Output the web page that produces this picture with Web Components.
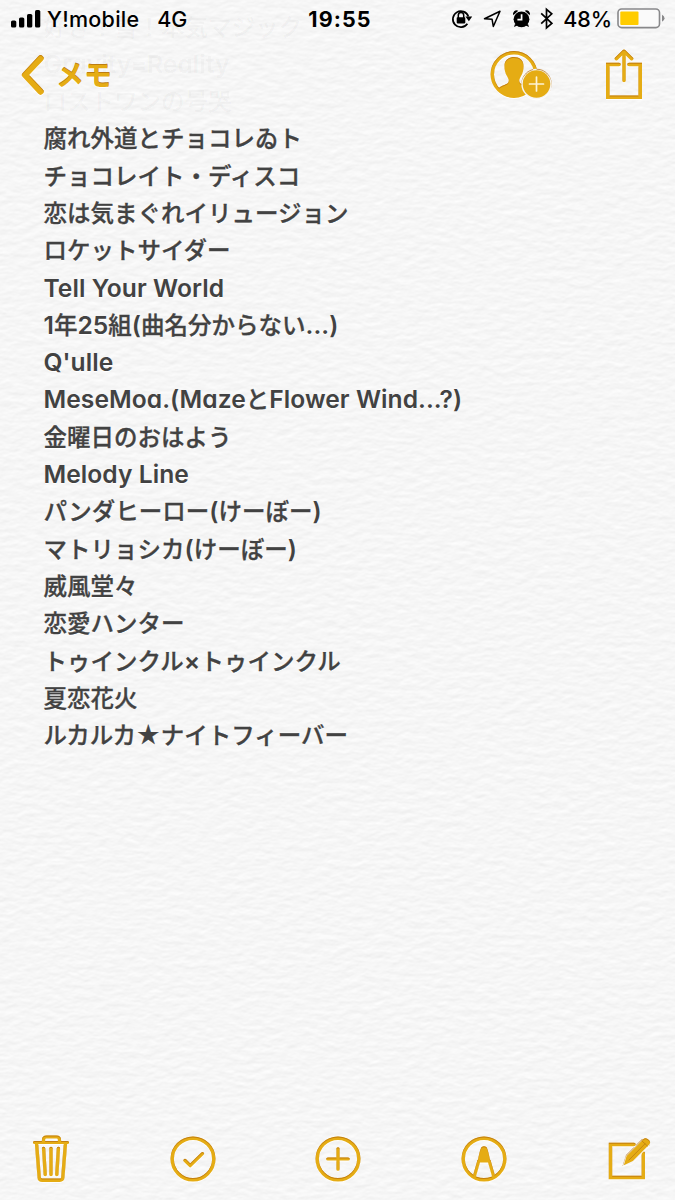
<!DOCTYPE html>
<html lang="ja">
<head>
<meta charset="UTF-8">
<title>メモ</title>
<style>
    html, body { margin: 0; height: 100%; }
    body {
        --gold: #e5ac14;
        --gold-edge: #bd7d12;
        --ink: #424242;
        --paper: #f6f6f6;
        background: var(--paper);
        font-family: Inter, "Noto Sans CJK JP", sans-serif;
        overflow: hidden;
    }
</style>
</head>
<body>
<note-app>
    <status-bar slot="status" carrier="Y!mobile" network="4G" time="19:55" battery="48"></status-bar>
    <nav-bar slot="nav" back="メモ"></nav-bar>
    <note-line class="ghost">好き！雪！本気マジック</note-line>
    <note-line class="ghost">Gravity=Reality</note-line>
    <note-line class="ghost">ロストワンの号哭</note-line>
    <note-line>腐れ外道とチョコレゐト</note-line>
    <note-line>チョコレイト・ディスコ</note-line>
    <note-line>恋は気まぐれイリュージョン</note-line>
    <note-line>ロケットサイダー</note-line>
    <note-line>Tell Your World</note-line>
    <note-line>1年25組(曲名分からない...)</note-line>
    <note-line>Q'ulle</note-line>
    <note-line>MeseMoa.(MazeとFlower Wind...?)</note-line>
    <note-line>金曜日のおはよう</note-line>
    <note-line>Melody Line</note-line>
    <note-line>パンダヒーロー(けーぼー)</note-line>
    <note-line>マトリョシカ(けーぼー)</note-line>
    <note-line>威風堂々</note-line>
    <note-line>恋愛ハンター</note-line>
    <note-line>トゥインクル×トゥインクル</note-line>
    <note-line>夏恋花火</note-line>
    <note-line>ルカルカ★ナイトフィーバー</note-line>
    <tool-bar slot="tools"></tool-bar>
</note-app>

<script>
const ICONS = {
    back: { w: 24, h: 40, art: '<path d="M20.6 3.4 5 20l15.6 16.6" stroke-width="6.2"/>' },
    person: {
        w: 62, h: 50,
        art: `<circle cx="24" cy="24.5" r="21.7" stroke-width="3.4"/>
            <path class="fill" d="M7.5 39.5c3-4 8-4.5 10.5-6.500 1.500-2 .5-4-.5-6-2.500-4-3-7-3-11 0-6 4-9 9.500-9s9.500 3 9.500 9c0 4-.5 7-3 11-1 2-2 4-.5 6 2 2 8 3 11 6-5 5-10 7-17 7S12.500 44 7.500 39.500z"/>
            <circle class="gap" cx="46.5" cy="34" r="15.2"/>
            <circle class="fill" cx="46.5" cy="34" r="13.800"/>
            <path class="light" d="M39.5 34h14M46.5 27v14"/>`
    },
    share: { w: 40, h: 52, art: '<path d="M15 15.5H3.8v32.8h32.4V15.5H25" stroke-width="3.6" stroke-linejoin="miter"/><path d="M20 31.500V2.500M12.4 9.800 20 2.200l7.600 7.600" stroke-width="3.4"/>' },
    trash: { w: 40, h: 50, art: '<path d="M3.5 8.5h33M12.5 8V6q0-3 3-3h10q3 0 3 3v2" stroke-width="3.2"/><path d="m5.5 9 2.7 34.5q.2 2.8 3 2.8h17.6q2.8 0 3-2.8L34.5 9M12.6 14.5l1.6 26M20 14.5v26M27.4 14.5l-1.6 26" stroke-width="3.4"/>' },
    check: { w: 48, h: 48, art: '<circle cx="24" cy="24" r="20.8" stroke-width="3.4"/><path d="m16 25.5 5.2 5.2L33.5 18.6" stroke-width="3.2"/>' },
    plus: { w: 48, h: 48, art: '<circle cx="24" cy="24" r="20.8" stroke-width="3.4"/><path d="M13.8 24h20.4M24 13.8v20.4" stroke-width="3.2"/>' },
    pen: { w: 48, h: 48, art: '<circle cx="24" cy="24" r="20.8" stroke-width="3.4"/><path d="m14.5 41 4.3-15h10.4l4.3 15" stroke-width="3"/><path class="fill" d="M17.6 26.8c1-5 2.6-13.3 4.1-14.7q2.3-1.8 4.6 0c1.5 1.4 3.1 9.7 4.1 14.7z"/>' },
    compose: { w: 48, h: 50, art: '<path d="M29 10.500H5.5v33h32.8V19" stroke-width="3.4" stroke-linejoin="miter"/><path class="gap" d="m17.5 32 3.5-11L37 5l8 6-18 18.5z"/><path class="fill" d="m18.8 31.3 2.8-9.2L38.5 5c2.3-2.7 8.6 2.2 6 5.2L27.9 27z"/><path class="groove" d="m24 26 16-16.2M37 7l5.4 5"/>' }
};

class NoteIcon extends HTMLElement {
    connectedCallback() {
        const icon = ICONS[this.getAttribute('name')];
        this.attachShadow({ mode: 'open' });
        this.shadowRoot.innerHTML = `
            <style>
                :host { display: block; width: ${icon.w}px; height: ${icon.h}px; flex: none; }
                svg { display: block; overflow: visible; }
                g { fill: none; stroke: var(--gold); stroke-linecap: round; stroke-linejoin: round; }
                .fill { fill: var(--gold); stroke: none; }
                .gap { fill: var(--paper); stroke: none; }
                .light { stroke: #fdf3d6; stroke-width: 1.7; }
                .groove { stroke: var(--gold-edge); stroke-width: .8; }
            </style>
            <svg width="${icon.w}" height="${icon.h}" viewBox="0 0 ${icon.w} ${icon.h}">
                <defs>
                    <!-- letterpress: dark upper inner edge, white lip below -->
                    <filter id="press" filterUnits="userSpaceOnUse" x="-4" y="-4" width="${icon.w + 8}" height="${icon.h + 8}" color-interpolation-filters="sRGB">
                        <feOffset in="SourceAlpha" dy="1" result="down"/>
                        <feComposite in="SourceAlpha" in2="down" operator="out" result="rim"/>
                        <feFlood flood-color="#b8700f" flood-opacity=".75"/>
                        <feComposite in2="rim" operator="in" result="shade"/>
                        <feFlood flood-color="#fff" flood-opacity=".9"/>
                        <feComposite in2="down" operator="in" result="lip"/>
                        <feMerge><feMergeNode in="lip"/><feMergeNode in="SourceGraphic"/><feMergeNode in="shade"/></feMerge>
                    </filter>
                </defs>
                <g filter="url(#press)">${icon.art}</g>
            </svg>
        `;
    }
}

class StatusBar extends HTMLElement {
    connectedCallback() {
        const battery = Number(this.getAttribute('battery'));
        this.attachShadow({ mode: 'open' });
        this.shadowRoot.innerHTML = `
            <style>
                :host {
                    display: grid;
                    grid-template-columns: 1fr auto 1fr;
                    align-items: center;
                    height: 37px;
                    padding: 0 10px 0 11px;
                    color: #000;
                    font-size: 21.5px;
                    font-weight: 500;
                }
                .left, .right { display: flex; align-items: center; }
                .right { justify-content: flex-end; }
                .carrier { margin-left: 6px; letter-spacing: .25px; }
                .network { margin-left: 18px; letter-spacing: -.2px; }
                .time { margin-left: 4px; font-weight: 700; letter-spacing: 1.1px; }
                .percent { margin: 0 5px 0 10px; letter-spacing: -.1px; }
                svg { display: block; flex: none; }
            </style>
            <div class="left">
                <svg width="30" height="18" viewBox="0 0 30 18">
                    <rect x="0" y="10.5" width="5.3" height="7" rx="1.6"/>
                    <rect x="8" y="7.5" width="5.3" height="10" rx="1.6"/>
                    <rect x="16" y="4" width="5.3" height="13.5" rx="1.6"/>
                    <rect x="24" y="0" width="5.3" height="17.5" rx="1.6"/>
                </svg>
                <span class="carrier">${this.getAttribute('carrier')}</span>
                <span class="network">${this.getAttribute('network')}</span>
            </div>
            <div class="time">${this.getAttribute('time')}</div>
            <div class="right">
                <svg width="102" height="24" viewBox="0 0 102 24">
                    <g fill="none" stroke="#000" stroke-width="1.7">
                        <path d="M16.4 16.8A8 8 0 1 1 17.4 9.5"/>
                        <path d="M7.3 11V8.3a2.7 2.7 0 0 1 5.4 0V11" stroke-width="1.5"/>
                        <path d="M33.5 11.8 49 4.3 42.3 19.5l-1.2-7.2z" stroke-width="1.5" stroke-linejoin="round"/>
                        <path d="m90.2 6.3 10.6 10-5.3 4.6V2.300l5.300 4.500L90.200 16.700" stroke-width="1.7"/>
                    </g>
                    <path d="M14.4 9.6h6.8l-3.3 4.6z"/>
                    <rect x="5.7" y="10.2" width="8.6" height="6.2" rx=".8"/>
                    <circle cx="70.5" cy="12.3" r="7.9"/>
                    <path d="M62.3 8.3a3.6 3.6 0 0 1 5-4.6zM78.7 8.3a3.6 3.6 0 0 0-5-4.6zM64 17l-1 3 3.8-1.7zM77 17l1 3-3.8-1.7z"/>
                    <path d="M70.6 7.2v5.5h-4.2" fill="none" stroke="#fff" stroke-width="1.7"/>
                </svg>
                <span class="percent">${battery}%</span>
                <svg width="48" height="21" viewBox="0 0 48 21">
                    <rect x="1" y="1" width="41.5" height="18.6" rx="3.6" fill="#fafafa" stroke="#88888a" stroke-width="1.6"/>
                    <rect x="3.3" y="3.6" width="${(38 * battery / 100).toFixed(1)}" height="13.4" rx="1" fill="#fc0"/>
                    <path d="M45 6.8q2.5 1 2.5 3.5T45 13.8z" fill="#88888a"/>
                </svg>
            </div>
        `;
    }
}

class NavBar extends HTMLElement {
    connectedCallback() {
        this.attachShadow({ mode: 'open' });
        this.shadowRoot.innerHTML = `
            <style>
                :host { display: flex; align-items: center; height: 75px; padding: 0 31px 0 20px; }
                .back {
                    margin: 2px auto 0 12px;
                    font-size: 28px;
                    line-height: 40px;
                    font-weight: 700;
                    color: var(--gold);
                    text-shadow: 0 -.6px 0 var(--gold-edge), 0 1px 0 #fff;
                }
                .person { margin-right: 52px; }
            </style>
            <note-icon name="back"></note-icon>
            <span class="back">${this.getAttribute('back')}</span>
            <note-icon class="person" name="person"></note-icon>
            <note-icon name="share"></note-icon>
        `;
    }
}

class NoteLine extends HTMLElement {
    connectedCallback() {
        // latin runs are set a little larger than the kana around them
        const runs = this.textContent.match(/[\x20-\x7e×]+|[^\x20-\x7e×]+/g);
        this.attachShadow({ mode: 'open' });
        this.shadowRoot.innerHTML = `
            <style>
                :host {
                    display: block;
                    height: 37.3px;
                    line-height: 37.3px;
                    white-space: pre;
                    font-size: 23.5px;
                    font-weight: 500;
                    color: var(--ink);
                    -webkit-text-stroke: .3px var(--ink);
                    text-shadow: 0 1px 0 #fff;
                }
                :host(.ghost) { color: rgba(60, 60, 60, .05); -webkit-text-stroke: 0; text-shadow: none; }
                .latin {
                    font-size: 24.6px;
                    font-weight: 600;
                    line-height: 1;
                    letter-spacing: .05px;
                    -webkit-text-stroke: 0;
                    font-feature-settings: "cv11", "calt" 0;
                }
            </style>
            ${runs.map(run => /[\x20-\x7e×]/.test(run) ? `<span class="latin">${run}</span>` : `<span>${run}</span>`).join('')}
        `.replace(/>\s+</g, '><').trim();
    }
}

class ToolBar extends HTMLElement {
    connectedCallback() {
        this.attachShadow({ mode: 'open' });
        this.shadowRoot.innerHTML = `
            <style>
                :host { display: flex; align-items: center; justify-content: space-between; height: 82px; padding: 0 22px 0 31px; }
            </style>
            ${['trash', 'check', 'plus', 'pen', 'compose'].map(name => `<note-icon name="${name}"></note-icon>`).join('')}
        `;
    }
}

class NoteApp extends HTMLElement {
    connectedCallback() {
        this.attachShadow({ mode: 'open' });
        this.shadowRoot.innerHTML = `
            <style>
                :host { display: grid; grid-template-rows: 37px 76px 1fr 82px; width: 675px; height: 1200px; position: relative; overflow: hidden; }
                .paper { position: absolute; inset: 0; z-index: -1; }
                .note { grid-area: 3 / 1; margin-top: -104.5px; padding-left: 43.5px; }
                .status { grid-area: 1 / 1; z-index: 1; }
                .nav { grid-area: 2 / 1; z-index: 1; }
                .tools { grid-area: 4 / 1; }
            </style>
            <svg class="paper" width="675" height="1200">
                <filter id="grain" x="0" y="0" width="100%" height="100%" color-interpolation-filters="sRGB">
                    <feTurbulence type="fractalNoise" baseFrequency=".08 .16" numOctaves="3" seed="8"/>
                    <feDiffuseLighting surfaceScale=".16" diffuseConstant="1.083" lighting-color="#fff">
                        <feDistantLight azimuth="260" elevation="63"/>
                    </feDiffuseLighting>
                </filter>
                <rect width="675" height="1200" filter="url(#grain)"/>
            </svg>
            <div class="status"><slot name="status"></slot></div>
            <div class="nav"><slot name="nav"></slot></div>
            <div class="note"><slot></slot></div>
            <div class="tools"><slot name="tools"></slot></div>
        `;
    }
}

customElements.define('note-icon', NoteIcon);
customElements.define('status-bar', StatusBar);
customElements.define('nav-bar', NavBar);
customElements.define('note-line', NoteLine);
customElements.define('tool-bar', ToolBar);
customElements.define('note-app', NoteApp);
</script>
</body>
</html>
